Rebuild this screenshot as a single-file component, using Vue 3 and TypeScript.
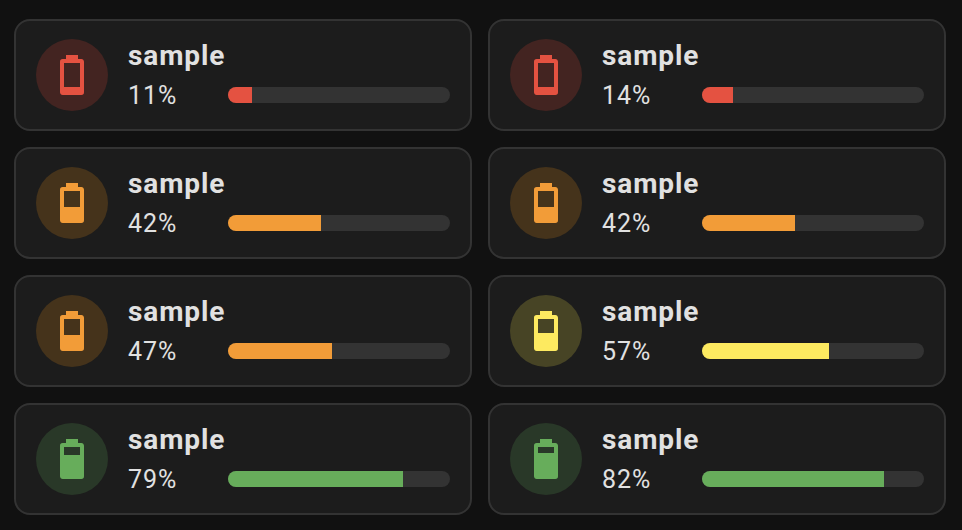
<script setup lang="ts">
interface Battery {
  name: string
  level: number
  tone: 'red' | 'orange' | 'yellow' | 'green'
  icon: number
}

// icon: top of the filled area inside the 24x24 battery glyph
const batteries: Battery[] = [
  { name: 'sample', level: 11, tone: 'red', icon: 18 },
  { name: 'sample', level: 14, tone: 'red', icon: 18 },
  { name: 'sample', level: 42, tone: 'orange', icon: 14 },
  { name: 'sample', level: 42, tone: 'orange', icon: 14 },
  { name: 'sample', level: 47, tone: 'orange', icon: 14 },
  { name: 'sample', level: 57, tone: 'yellow', icon: 13 },
  { name: 'sample', level: 79, tone: 'green', icon: 10 },
  { name: 'sample', level: 82, tone: 'green', icon: 9 },
]

const glyph = (top: number): string =>
  `M16 ${top}H8V6H16M16.67 4H15V2H9V4H7.33A1.33 1.33 0 0 0 6 5.33V20.67C6 21.4 6.6 22 7.33 22H16.67A1.33 1.33 0 0 0 18 20.67V5.33C18 4.6 17.4 4 16.67 4Z`
</script>

<template>
  <main class="grid">
    <article v-for="(b, i) in batteries" :key="i" class="card" :class="b.tone">
      <div class="badge">
        <svg viewBox="0 0 24 24" width="48" height="48">
          <path fill="currentColor" fill-rule="evenodd" :d="glyph(b.icon)" />
        </svg>
      </div>
      <div class="info">
        <div class="name">{{ b.name }}</div>
        <div class="row">
          <span class="value">{{ b.level }}%</span>
          <div class="track"><div class="fill" :style="{ width: b.level + '%' }"></div></div>
        </div>
      </div>
    </article>
  </main>
</template>

<style>
body {
  background: #111111;
}
</style>

<style scoped>
.grid {
  display: grid;
  grid-template-columns: 458px 458px;
  grid-auto-rows: 112px;
  gap: 16px;
  padding: 19px 14px 0;
  height: 530px;
  box-sizing: border-box;
  overflow: hidden;
  font-family: Roboto, sans-serif;
  color: #e1e1e1;
}
.card {
  box-sizing: border-box;
  display: flex;
  align-items: center;
  gap: 20px;
  padding: 0 20px;
  border: 2px solid #333333;
  border-radius: 16px;
  background: #1c1c1c;
}
.badge {
  flex: none;
  display: flex;
  align-items: center;
  justify-content: center;
  width: 72px;
  height: 72px;
  border-radius: 50%;
  color: var(--tone);
  background: var(--soft);
}
.badge svg {
  display: block;
}
.info {
  flex: 1;
}
.name {
  height: 40px;
  font-size: 28px;
  line-height: 42px;
  font-weight: 700;
  letter-spacing: 0.9px;
}
.row {
  display: flex;
  align-items: center;
  height: 40px;
}
.value {
  width: 100px;
  padding-top: 2px;
  box-sizing: border-box;
  font-size: 25px;
  line-height: 38px;
  letter-spacing: 1px;
}
.track {
  flex: 1;
  height: 16px;
  border-radius: 8px;
  overflow: hidden;
  background: #333333;
}
.fill {
  height: 100%;
  background: var(--tone);
}
.red {
  --tone: #e45241;
  --soft: #432421;
}
.orange {
  --tone: #f29c38;
  --soft: #45331b;
}
.yellow {
  --tone: #fdea60;
  --soft: #474425;
}
.green {
  --tone: #67ad5b;
  --soft: #293828;
}
</style>
